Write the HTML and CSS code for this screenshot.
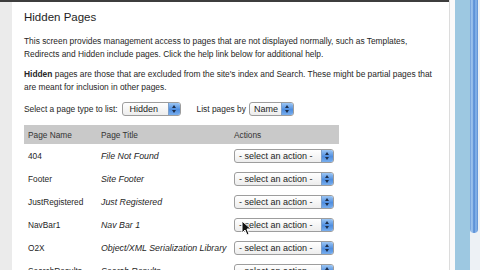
FILE: index.html
```html
<!DOCTYPE html>
<html>
<head>
<meta charset="utf-8">
<link rel="stylesheet" href="styles.css">
</head>
<body>
<div class="screen">
  <div class="page">
    <div class="topbar"></div>
    <div class="pagerow">
      <div class="gutter"></div>
      <div class="content">
        <h1 class="title">Hidden Pages</h1>
        <p class="para">This screen provides management access to pages that are not displayed normally, such as Templates,<br>Redirects and Hidden include pages. Click the help link below for additional help.</p>
        <p class="para"><b>Hidden</b> pages are those that are excluded from the site's index and Search. These might be partial pages that<br>are meant for inclusion in other pages.</p>
        <div class="filters">
          <span class="lbl">Select a page type to list:</span>
          <span class="sel sel-type"><span class="sel-text">Hidden</span><span class="step"><i class="up"></i><i class="dn"></i></span></span>
          <span class="lbl lbl2">List pages by</span>
          <span class="sel sel-by"><span class="sel-text">Name</span><span class="step"><i class="up"></i><i class="dn"></i></span></span>
        </div>
        <div class="table">
          <div class="row head">
            <span class="c1">Page Name</span><span class="c2">Page Title</span><span class="c3">Actions</span>
          </div>
          <div class="row">
            <span class="c1">404</span><span class="c2 it">File Not Found</span><span class="c3"><span class="sel sel-act"><span class="sel-text">- select an action -</span><span class="step"><i class="up"></i><i class="dn"></i></span></span></span>
          </div>
          <div class="row">
            <span class="c1">Footer</span><span class="c2 it">Site Footer</span><span class="c3"><span class="sel sel-act"><span class="sel-text">- select an action -</span><span class="step"><i class="up"></i><i class="dn"></i></span></span></span>
          </div>
          <div class="row">
            <span class="c1">JustRegistered</span><span class="c2 it">Just Registered</span><span class="c3"><span class="sel sel-act"><span class="sel-text">- select an action -</span><span class="step"><i class="up"></i><i class="dn"></i></span></span></span>
          </div>
          <div class="row">
            <span class="c1">NavBar1</span><span class="c2 it">Nav Bar 1</span><span class="c3"><span class="sel sel-act"><span class="sel-text">- select an action -</span><span class="step"><i class="up"></i><i class="dn"></i></span></span></span>
          </div>
          <div class="row">
            <span class="c1">O2X</span><span class="c2 it">Object/XML Serialization Library</span><span class="c3"><span class="sel sel-act"><span class="sel-text">- select an action -</span><span class="step"><i class="up"></i><i class="dn"></i></span></span></span>
          </div>
          <div class="row">
            <span class="c1">SearchResults</span><span class="c2 it">Search Results</span><span class="c3"><span class="sel sel-act"><span class="sel-text">- select an action -</span><span class="step"><i class="up"></i><i class="dn"></i></span></span></span>
          </div>
        </div>
      </div>
    </div>
  </div>
  <div class="sep"></div>
  <div class="desk"></div>
  <div class="track"><div class="thumb"></div></div>
</div>
<svg class="cursor" width="10" height="16" viewBox="0 0 10 16"><path d="M1 1 L1 13 L4 10 L6 15 L8 14 L6 9 L10 9 Z" fill="#111" stroke="#fff" stroke-width="1"/></svg>
</body>
</html>
```
FILE: styles.css
```css
html, body { margin: 0; padding: 0; }
body {
  width: 480px; height: 270px; overflow: hidden; position: relative;
  background: #fff;
  font-family: "Liberation Sans", Arial, sans-serif;
  color: #262626;
}
.screen { display: flex; height: 270px; }
.page { width: 450px; display: flex; flex-direction: column; }
.topbar { height: 2px; background: #3d3d3d; }
.pagerow { flex: 1; display: flex; min-height: 0; }
.gutter { width: 12px; background: #ebebeb; }
.content { flex: 1; padding-left: 12px; background: #fff; overflow: hidden; }
.title { margin: 8px 0 0; font-size: 11.5px; line-height: 14px; font-weight: normal; color: #1e1e1e; }
.para { margin: 11px 0 0; font-size: 8.4px; line-height: 13px; white-space: nowrap; }
.para + .para { margin-top: 7px; }
.para b { font-weight: bold; }
.filters { margin-top: 8px; height: 14px; display: flex; align-items: center; font-size: 8.4px; }
.lbl2 { margin-left: 16px; }
.sel {
  display: inline-flex; align-items: stretch; box-sizing: border-box;
  border: 1px solid #9d9d9d; border-radius: 3px; overflow: hidden;
  background: linear-gradient(#ffffff, #ededed);
  height: 14px; font-size: 8.4px; color: #1c1c1c;
}
.sel-text { flex: 1; padding-left: 6px; line-height: 12px; white-space: nowrap; }
.step {
  width: 11px; position: relative;
  background: linear-gradient(#9cc6f4, #4f8ee0 55%, #78aeee);
  border-left: 1px solid #7d9fc9;
}
.step i { position: absolute; left: 3px; width: 0; height: 0; border-left: 2.5px solid transparent; border-right: 2.5px solid transparent; }
.step .up { top: 2px; border-bottom: 3px solid #1d2e4a; }
.step .dn { bottom: 2px; border-top: 3px solid #1d2e4a; }
.sel-type { width: 59px; margin-left: 4px; }
.sel-type .sel-text { font-size: 9px; padding-left: 7px; }
.sel-by { width: 45px; margin-left: 3px; }
.sel-by .sel-text { font-size: 9px; padding-left: 4px; }
.table { margin-top: 9px; width: 315px; font-size: 8.3px; }
.row { display: flex; align-items: center; height: 23px; }
.row.head { height: 19px; background: #c9c9c9; color: #333; }
.c1 { width: 69px; padding-left: 4px; white-space: nowrap; }
.c2 { width: 129px; padding-left: 4px; white-space: nowrap; }
.c3 { padding-left: 4px; }
.it { font-style: italic; font-size: 8.8px; }
.sel-act { width: 100px; }
.sel-act .sel-text { padding-left: 4px; font-size: 9px; }
.sep { width: 5px; background: #fafafa; border-left: 1px solid #dcdcdc; }
.desk { width: 15px; background: #9dc8e1; }
.track { width: 10px; background: #edf1f5; display: flex; flex-direction: column; }
.thumb {
  height: 233px; width: 8px;
  background: linear-gradient(to right, #6a9ad8, #a9cdf2 25%, #4f86d2 50%, #8cb9ec 75%, #5a8cd2);
  border-radius: 0 0 4px 4px;
}
.cursor { position: absolute; left: 241px; top: 220px; }
```
